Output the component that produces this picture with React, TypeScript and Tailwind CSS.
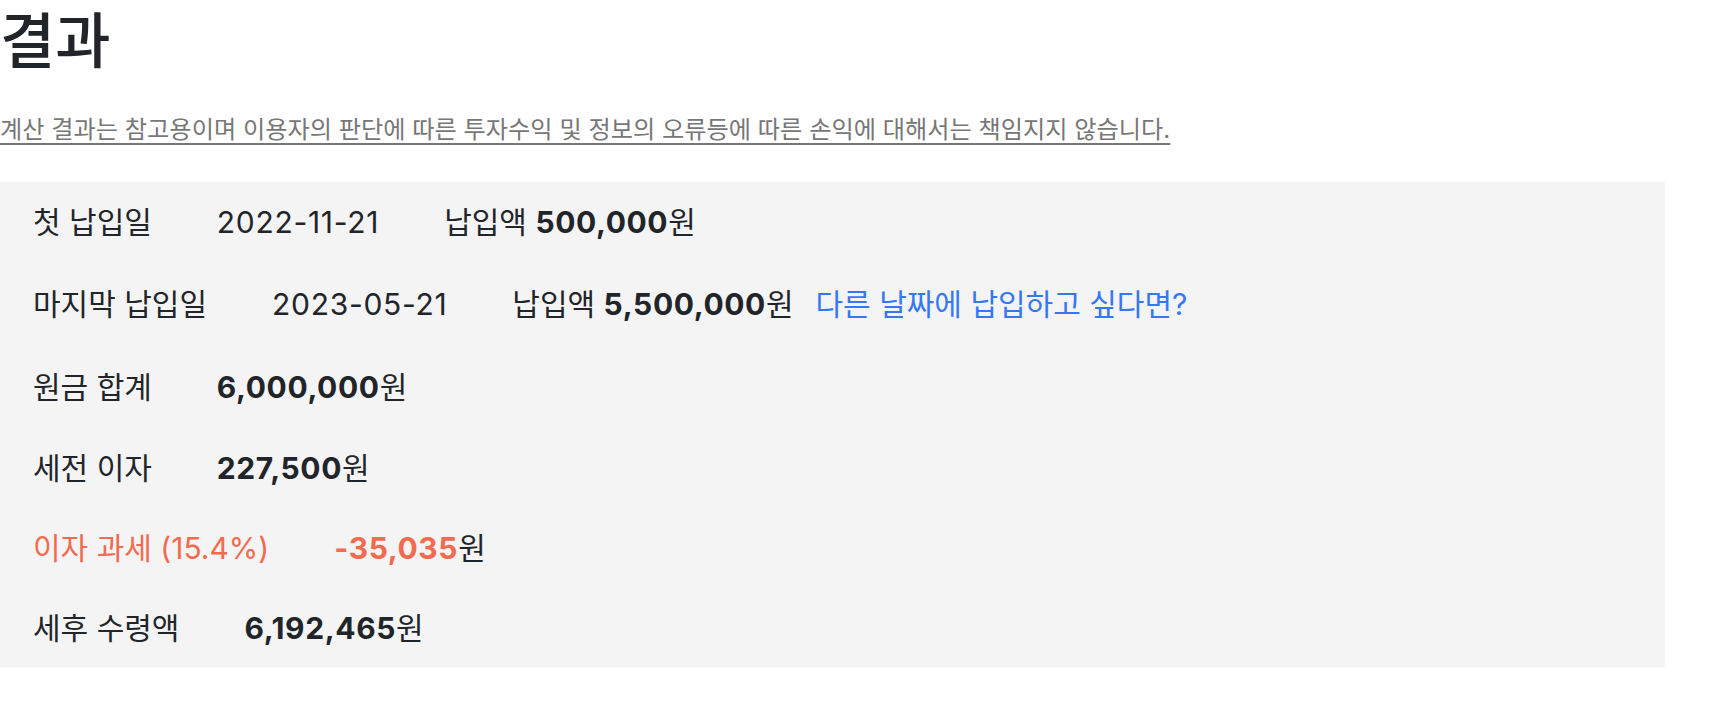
const font = { fontFamily: 'Inter, "Noto Sans CJK KR", "Noto Sans", sans-serif' };

const Won = ({ value, tone = 'text-[#212529]' }: { value: string; tone?: string }) => (
  <span>
    <b className={`font-bold tracking-[0.6px] ${tone}`}>{value}</b>
    <span className="text-[#212529]">원</span>
  </span>
);

export default function App() {
  return (
    <div className="bg-white text-[#212529] w-[1712px] h-[708px]" style={font}>
      <h1 className="pt-[5px] text-[60px] leading-[1.2] font-medium text-[#212529]">결과</h1>
      <p className="mt-[36px] text-[24.2px] leading-[34px] text-[#777] underline underline-offset-[5px]">
        계산 결과는 참고용이며 이용자의 판단에 따른 투자수익 및 정보의 오류등에 따른 손익에 대해서는 책임지지 않습니다.
      </p>

      <div className="mt-[35px] w-[1665px] bg-[#f4f4f4] px-[33px] text-[30px]">
        <div className="flex items-center h-[81px] gap-[65px]">
          <span>첫 납입일</span>
          <span className="tracking-[0.7px]">2022-11-21</span>
          <span>
            납입액 <Won value="500,000" />
          </span>
        </div>
        <div className="flex items-center h-[83px]">
          <span className="mr-[65px]">마지막 납입일</span>
          <span className="mr-[65px] tracking-[0.7px]">2023-05-21</span>
          <span>
            납입액 <Won value="5,500,000" />
          </span>
          <a href="#" className="ml-[22px] text-[#3478f6]">다른 날짜에 납입하고 싶다면?</a>
        </div>
        <div className="flex items-center h-[82px] gap-[65px]">
          <span>원금 합계</span>
          <Won value="6,000,000" />
        </div>
        <div className="flex items-center h-[80px] gap-[65px]">
          <span>세전 이자</span>
          <Won value="227,500" />
        </div>
        <div className="flex items-center h-[81px] gap-[65px]">
          <span className="text-[#f26b4f]">이자 과세 (15.4%)</span>
          <Won value="-35,035" tone="text-[#f26b4f]" />
        </div>
        <div className="flex items-center h-[78px] gap-[65px]">
          <span>세후 수령액</span>
          <Won value="6,192,465" />
        </div>
      </div>
    </div>
  );
}
